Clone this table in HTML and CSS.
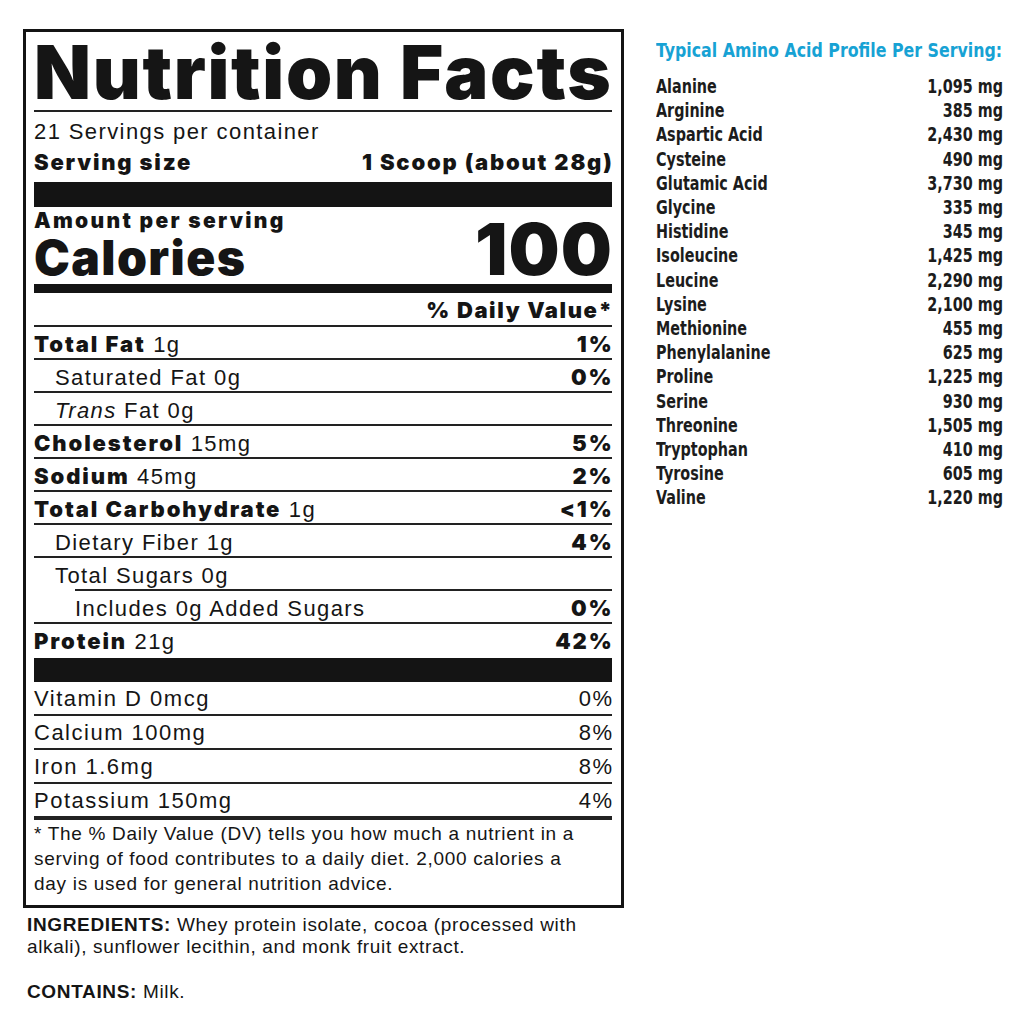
FILE: index.html
```html
<!DOCTYPE html>
<html lang="en">
<head>
<meta charset="utf-8">
<title>Nutrition Facts</title>
<link rel="stylesheet" href="styles.css">
</head>
<body>
<div class="page">
  <div class="left">
    <section class="label">
      <h1 class="title">Nutrition Facts</h1>
      <div class="servings">21 Servings per container</div>
      <div class="size"><span>Serving size</span><span class="end">1 Scoop (about 28g)</span></div>
      <div class="bar-xl"></div>
      <div class="cal">
        <div class="cal-left">
          <div class="aps">Amount per serving</div>
          <div class="cal-word">Calories</div>
        </div>
        <div class="cal-num">100</div>
      </div>
      <div class="bar-md"></div>
      <div class="dv-head"><b class="end">% Daily Value*</b></div>
      <div class="row"><span><b>Total Fat</b> 1g</span><b class="end">1%</b></div>
      <div class="row in1"><span>Saturated Fat 0g</span><b class="end">0%</b></div>
      <div class="row in1"><span><i>Trans</i> Fat 0g</span></div>
      <div class="row"><span><b>Cholesterol</b> 15mg</span><b class="end">5%</b></div>
      <div class="row"><span><b>Sodium</b> 45mg</span><b class="end">2%</b></div>
      <div class="row"><span><b>Total Carbohydrate</b> 1g</span><b class="end">&lt;1%</b></div>
      <div class="row in1"><span>Dietary Fiber 1g</span><b class="end">4%</b></div>
      <div class="row in1 noline"><span>Total Sugars 0g</span></div>
      <div class="subline"></div>
      <div class="row in2"><span>Includes 0g Added Sugars</span><b class="end">0%</b></div>
      <div class="row protein"><span><b>Protein</b> 21g</span><b class="end">42%</b></div>
      <div class="bar-lg"></div>
      <div class="row vit"><span>Vitamin D 0mcg</span><span class="end">0%</span></div>
      <div class="row vit"><span>Calcium 100mg</span><span class="end">8%</span></div>
      <div class="row vit"><span>Iron 1.6mg</span><span class="end">8%</span></div>
      <div class="row vit last"><span>Potassium 150mg</span><span class="end">4%</span></div>
      <p class="foot">* The % Daily Value (DV) tells you how much a nutrient in a<br>serving of food contributes to a daily diet. 2,000 calories a<br>day is used for general nutrition advice.</p>
    </section>
    <p class="ingredients"><b>INGREDIENTS:</b> Whey protein isolate, cocoa (processed with<br>alkali), sunflower lecithin, and monk fruit extract.</p>
    <p class="contains"><b>CONTAINS:</b> Milk.</p>
  </div>
  <aside class="amino">
    <h2 class="amino-title">Typical Amino Acid Profile Per Serving:</h2>
    <ul class="amino-list">
      <li><span>Alanine</span><span>1,095 mg</span></li>
      <li><span>Arginine</span><span>385 mg</span></li>
      <li><span>Aspartic Acid</span><span>2,430 mg</span></li>
      <li><span>Cysteine</span><span>490 mg</span></li>
      <li><span>Glutamic Acid</span><span>3,730 mg</span></li>
      <li><span>Glycine</span><span>335 mg</span></li>
      <li><span>Histidine</span><span>345 mg</span></li>
      <li><span>Isoleucine</span><span>1,425 mg</span></li>
      <li><span>Leucine</span><span>2,290 mg</span></li>
      <li><span>Lysine</span><span>2,100 mg</span></li>
      <li><span>Methionine</span><span>455 mg</span></li>
      <li><span>Phenylalanine</span><span>625 mg</span></li>
      <li><span>Proline</span><span>1,225 mg</span></li>
      <li><span>Serine</span><span>930 mg</span></li>
      <li><span>Threonine</span><span>1,505 mg</span></li>
      <li><span>Tryptophan</span><span>410 mg</span></li>
      <li><span>Tyrosine</span><span>605 mg</span></li>
      <li><span>Valine</span><span>1,220 mg</span></li>
    </ul>
  </aside>
</div>
</body>
</html>
```

FILE: styles.css
```css
html, body {
  margin: 0;
  padding: 0;
  background: #fff;
}
body {
  color: #151515;
  font-family: "Liberation Sans", Arial, sans-serif;
}
.page {
  display: flex;
  align-items: flex-start;
  padding: 29px 0 0 23px;
}
.left {
  width: 601px;
  flex: none;
}
.label {
  border: 3px solid #141414;
  padding: 0 9px 0 8px;
  letter-spacing: 1.4px;
}
.label b {
  font-family: Inter, "Liberation Sans", sans-serif;
  font-weight: 900;
  letter-spacing: 1.9px;
}
.label .end {
  margin-right: -1.5px;
}
.title {
  margin: 0;
  padding-top: 2px;
  font-family: Inter, "Liberation Sans", sans-serif;
  font-weight: 900;
  font-size: 74px;
  line-height: 76px;
  letter-spacing: 1.7px;
  white-space: nowrap;
  border-bottom: 2px solid #222;
}
.servings {
  padding-top: 7px;
  font-size: 22px;
  line-height: 26px;
}
.size {
  display: flex;
  justify-content: space-between;
  margin-top: 4px;
  padding-bottom: 7px;
  font-family: Inter, "Liberation Sans", sans-serif;
  font-weight: 900;
  font-size: 22px;
  line-height: 26px;
  letter-spacing: 1.8px;
  white-space: nowrap;
}
.bar-xl {
  height: 25px;
  background: #141414;
}
.cal {
  display: flex;
  justify-content: space-between;
  align-items: flex-end;
  padding: 3px 0 2px;
  font-family: Inter, "Liberation Sans", sans-serif;
  font-weight: 900;
}
.aps {
  font-size: 21px;
  line-height: 22px;
  margin-bottom: 2px;
  letter-spacing: 2.3px;
  white-space: nowrap;
}
.cal-word {
  font-size: 48px;
  line-height: 48px;
  letter-spacing: 1.4px;
}
.cal-num {
  font-size: 72px;
  line-height: 66px;
  letter-spacing: 1px;
  margin-right: -1px;
}
.bar-md {
  height: 9px;
  background: #141414;
}
.dv-head {
  display: flex;
  justify-content: flex-end;
  height: 32px;
  font-size: 22px;
  line-height: 35px;
  border-bottom: 2px solid #222;
}
.dv-head b {
  letter-spacing: 1.6px;
}
.row {
  display: flex;
  justify-content: space-between;
  height: 31px;
  font-size: 22px;
  line-height: 35px;
  border-bottom: 2px solid #222;
  white-space: nowrap;
}
.row.in1 { padding-left: 21px; }
.row.in2 { padding-left: 41px; }
.row.noline { border-bottom: none; }
.subline {
  height: 2px;
  margin-left: 41px;
  background: #222;
}
.row.protein {
  height: 34px;
  border-bottom: none;
}
.bar-lg {
  height: 24px;
  background: #141414;
}
.row.vit {
  height: 32px;
  font-size: 22px;
  line-height: 34px;
  letter-spacing: 1.5px;
}
.row.vit.last {
  border-bottom-width: 4px;
}
.foot {
  margin: 0;
  padding: 1px 0 9px;
  font-size: 19px;
  line-height: 25px;
  letter-spacing: 0.7px;
  white-space: nowrap;
}
.ingredients {
  margin: 6px 0 0;
  padding-left: 4px;
  font-size: 19px;
  line-height: 22px;
  letter-spacing: 0.65px;
  white-space: nowrap;
}
.contains {
  margin: 23px 0 0;
  padding-left: 4px;
  font-size: 19px;
  line-height: 22px;
  letter-spacing: 0.65px;
}
.amino {
  width: 347px;
  margin-left: 32px;
  flex: none;
  font-family: "DejaVu Sans Condensed", "DejaVu Sans", "Liberation Sans", sans-serif;
  font-stretch: condensed;
  font-weight: 700;
}
.amino-title {
  margin: 9px 0 0;
  width: 373px;
  color: #17a2d4;
  font-size: 19px;
  line-height: 24px;
  font-weight: 700;
  white-space: nowrap;
  transform: scaleX(0.925);
  transform-origin: left top;
}
.amino-list {
  list-style: none;
  width: 413px;
  margin: 12px 0 0;
  padding: 0;
  color: #1c1c1c;
  font-size: 19px;
  line-height: 24.2px;
  transform: scaleX(0.84);
  transform-origin: left top;
}
.amino-list li {
  display: flex;
  justify-content: space-between;
}
```
